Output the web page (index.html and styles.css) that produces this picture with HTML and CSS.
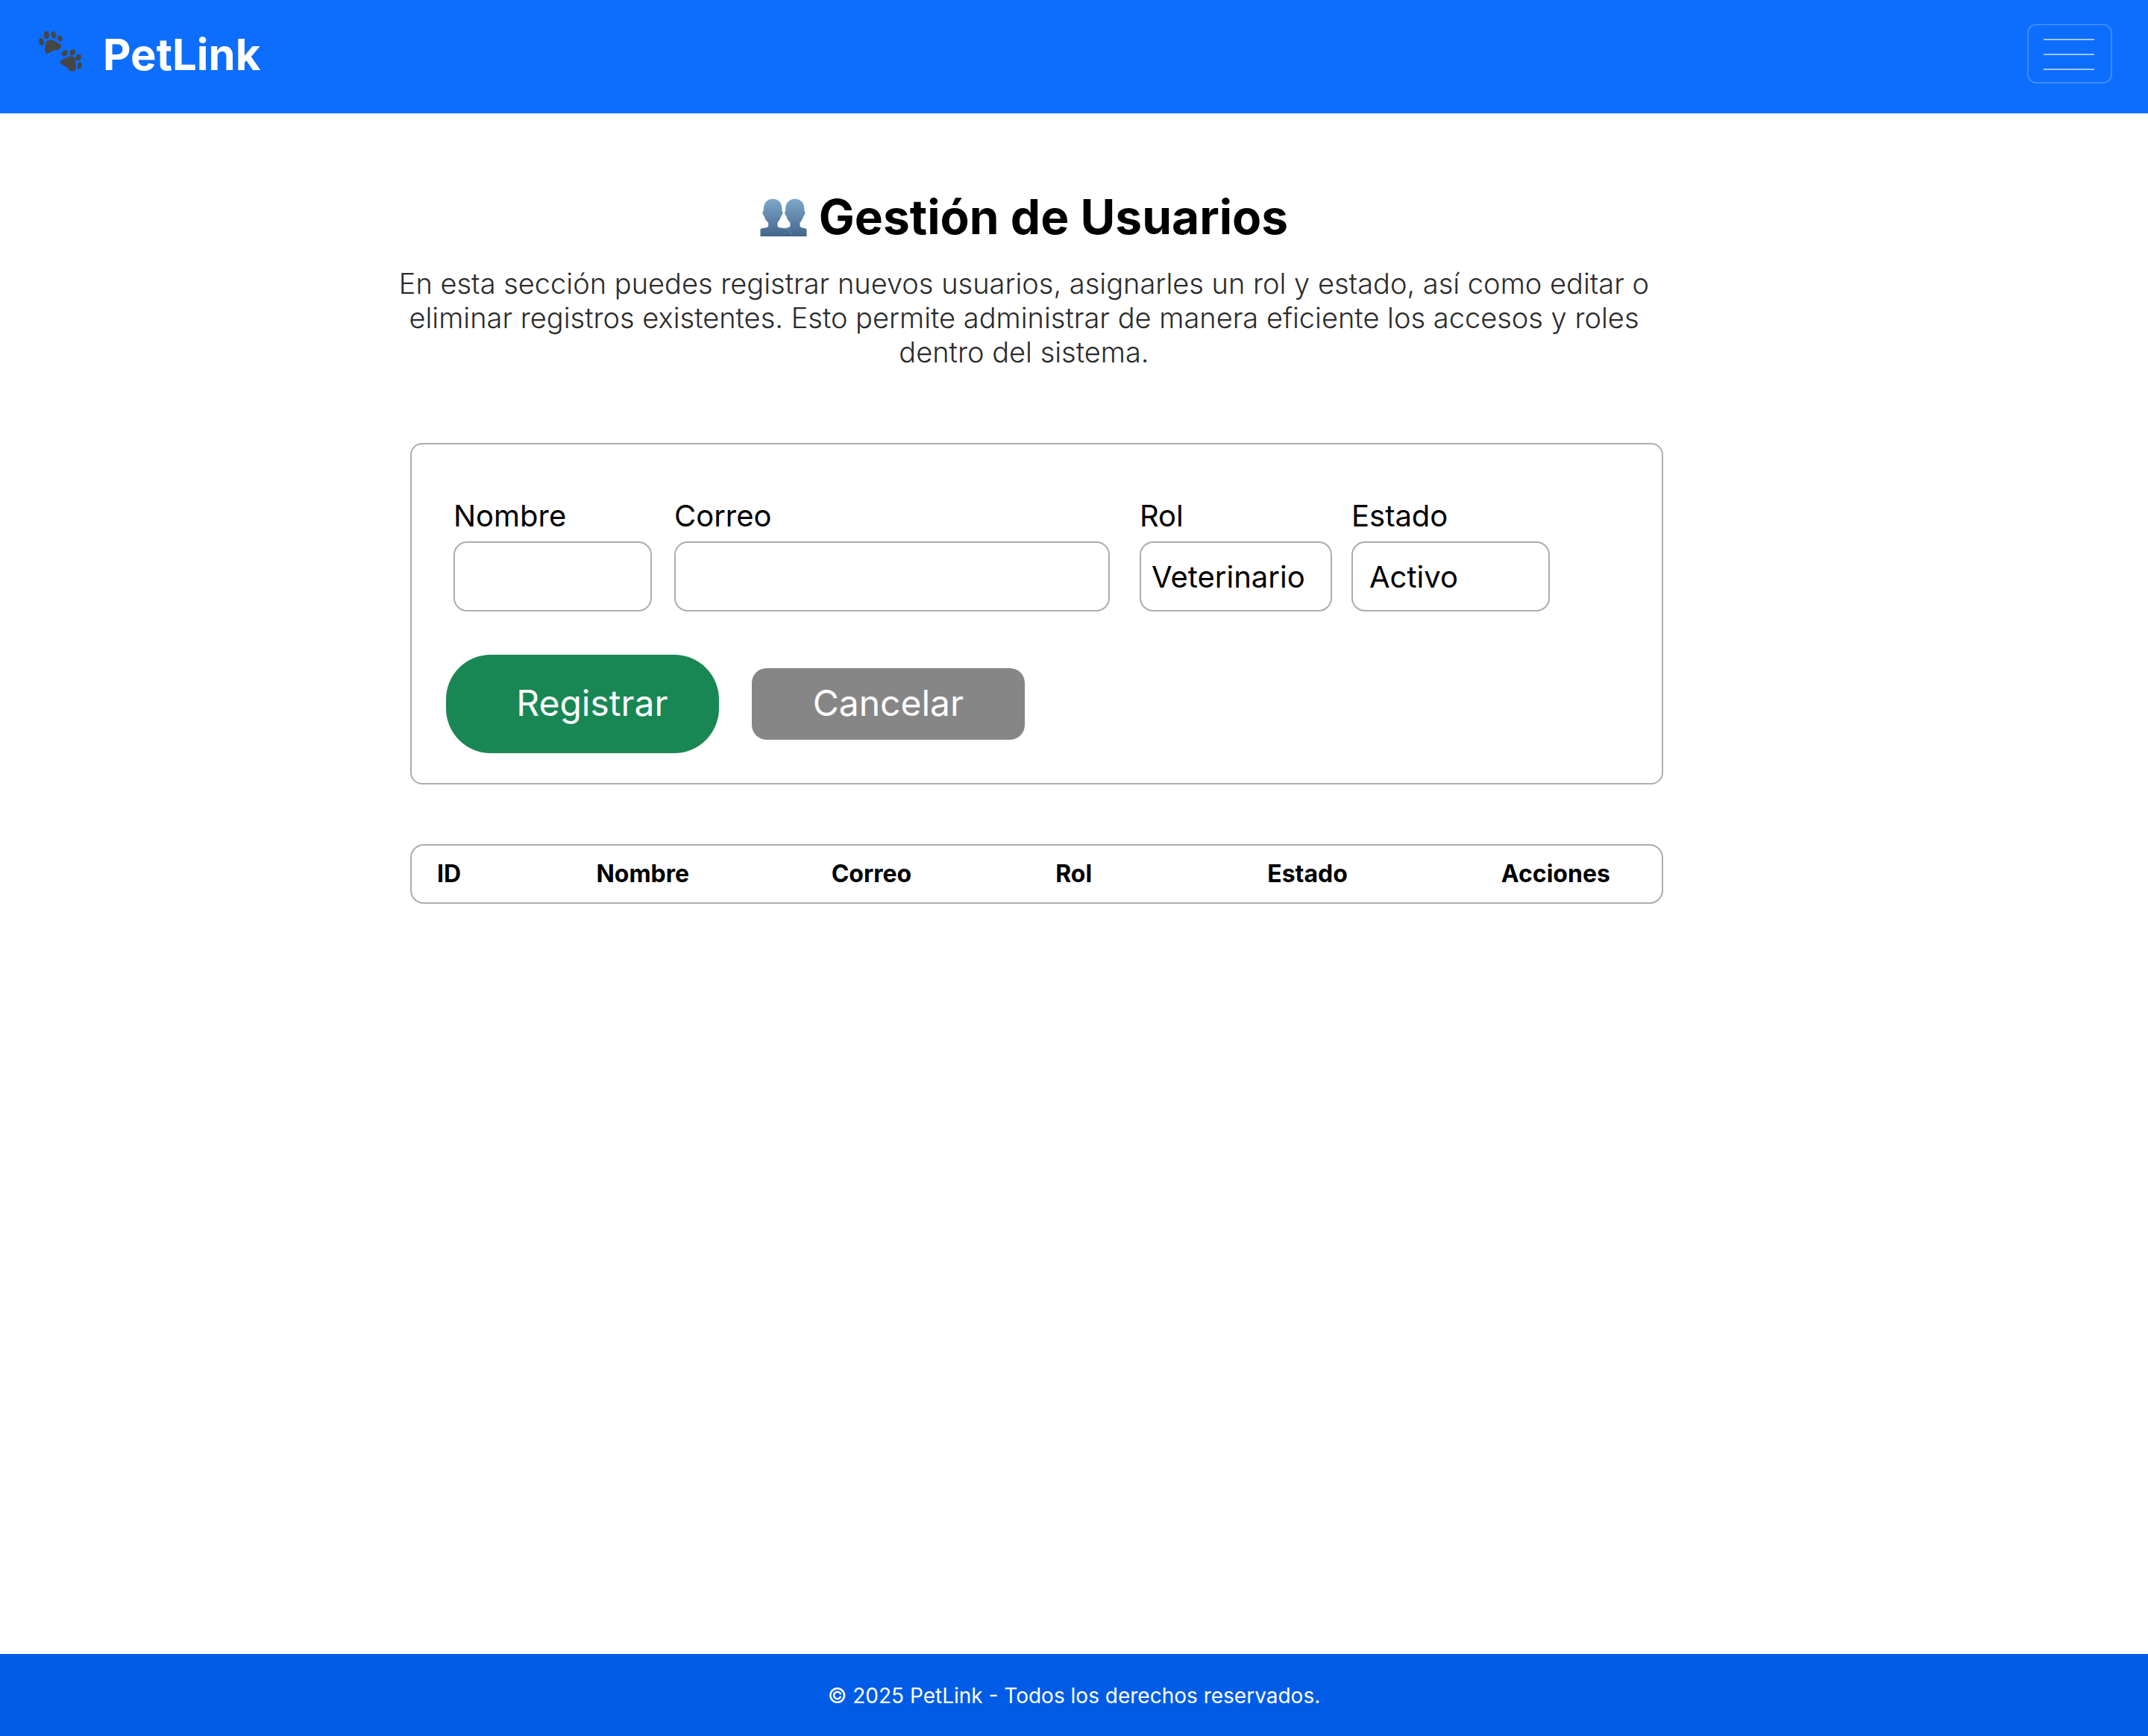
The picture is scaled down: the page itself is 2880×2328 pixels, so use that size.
FILE: index.html
```html
<!DOCTYPE html>
<html lang="es">
<head>
  <meta charset="utf-8">
  <meta name="viewport" content="width=device-width, initial-scale=1">
  <title>PetLink - Gestión de Usuarios</title>
  <link rel="stylesheet" href="styles.css">
</head>
<body>
  <header class="navbar">
    <a class="brand" href="#">
      <svg class="brand-icon" viewBox="0 0 240 240" aria-hidden="true">
        <g fill="#464646">
          <ellipse cx="47" cy="78" rx="10" ry="16" transform="rotate(-14 47 78)"/>
          <ellipse cx="67" cy="51" rx="11" ry="16" transform="rotate(-4 67 51)"/>
          <ellipse cx="96" cy="50" rx="10" ry="15" transform="rotate(-14 96 50)"/>
          <ellipse cx="121" cy="65" rx="9" ry="12" transform="rotate(-32 121 65)"/>
          <path d="M69 75C77 68 91 69 101 76C109 82 124 85 126 94C128 104 120 110 108 111C94 112 88 116 82 121C73 128 60 126 60 114C60 105 63 101 63 92C63 84 64 79 69 75Z"/>
          <ellipse cx="140" cy="124" rx="10" ry="14" transform="rotate(36 140 124)"/>
          <ellipse cx="172" cy="121" rx="11" ry="14" transform="rotate(38 172 121)"/>
          <ellipse cx="196" cy="141" rx="11" ry="13" transform="rotate(22 196 141)"/>
          <ellipse cx="200" cy="174" rx="9" ry="14" transform="rotate(14 200 174)"/>
          <path d="M149 141C158 135 174 134 180 142C186 149 184 158 184 167C184 176 189 184 184 191C178 199 165 199 158 192C150 184 146 177 137 174C128 171 122 166 123 158C124 148 140 147 149 141Z"/>
        </g>
      </svg>
      <span>PetLink</span>
    </a>
    <button class="toggler" type="button" aria-label="Abrir menú">
      <span class="toggler-bar"></span>
      <span class="toggler-bar"></span>
      <span class="toggler-bar"></span>
    </button>
  </header>

  <main class="content">
    <section class="intro">
      <h1 class="title">
        <svg class="title-icon" viewBox="26 34 188 156" aria-hidden="true">
          <defs>
            <linearGradient id="people" gradientUnits="userSpaceOnUse" x1="0" y1="36" x2="0" y2="187">
              <stop offset="0" stop-color="#7da8c9"/>
              <stop offset="1" stop-color="#45658c"/>
            </linearGradient>
          </defs>
          <path fill="url(#people)" d="M166 36C189 36 204 52 204 78L203 84C209 83 208 100 201 104C197 118 192 125 186 132V145C187 154 203 151 213 157V187H117V157C127 151 146 154 147 145V132C139 125 134 118 131 104C124 100 123 83 129 84L128 78C128 52 143 36 166 36Z"/>
          <path fill="url(#people)" d="M77 36C100 36 114 52 114 78L113 84C119 83 118 100 111 104C107 118 102 125 96 132V145C97 154 120 152 132 157C144 160 151 170 152 187H27V157C37 151 58 154 59 145V132C51 125 45 118 42 104C35 100 34 83 40 84V78C40 52 54 36 77 36Z"/>
          <path fill="none" stroke="#6b96b8" stroke-width="2" d="M116 154C138 154 150 163 151 178"/>
        </svg>
        <span>Gestión de Usuarios</span>
      </h1>
      <p class="lead">En esta sección puedes registrar nuevos usuarios, asignarles un rol y estado, así como editar o eliminar registros existentes. Esto permite administrar de manera eficiente los accesos y roles dentro del sistema.</p>
    </section>

    <form class="card">
      <div class="fields">
        <div class="field field-name">
          <label for="nombre">Nombre</label>
          <input class="control" id="nombre" type="text">
        </div>
        <div class="field field-mail">
          <label for="correo">Correo</label>
          <input class="control" id="correo" type="email">
        </div>
        <div class="field field-role">
          <label for="rol">Rol</label>
          <select class="control" id="rol"><option>Veterinario</option></select>
        </div>
        <div class="field field-state">
          <label for="estado">Estado</label>
          <select class="control" id="estado"><option>Activo</option></select>
        </div>
      </div>
      <div class="actions">
        <button class="btn btn-save" type="submit">Registrar</button>
        <button class="btn btn-cancel" type="reset">Cancelar</button>
      </div>
    </form>

    <table class="users">
      <colgroup>
        <col class="col-id"><col class="col-name"><col class="col-mail"><col class="col-role"><col class="col-state"><col class="col-actions">
      </colgroup>
      <thead>
        <tr>
          <th scope="col">ID</th>
          <th scope="col">Nombre</th>
          <th scope="col">Correo</th>
          <th scope="col">Rol</th>
          <th scope="col">Estado</th>
          <th scope="col">Acciones</th>
        </tr>
      </thead>
    </table>
  </main>

  <footer class="footer">© 2025 PetLink - Todos los derechos reservados.</footer>
</body>
</html>
```

FILE: styles.css
```css
* {
  box-sizing: border-box;
}

body {
  display: flex;
  flex-direction: column;
  min-height: 100vh;
  margin: 0;
  background: #fff;
  color: #000;
  font-family: Inter, "Liberation Sans", sans-serif;
}

.navbar {
  display: flex;
  align-items: flex-start;
  justify-content: space-between;
  height: 152px;
  padding: 30px 48px 0 40px;
  background: #0d6efd;
}

.brand {
  display: flex;
  align-items: flex-start;
  gap: 18px;
  color: #fff;
  font-size: 58px;
  font-weight: 700;
  line-height: 86px;
  text-decoration: none;
}

.brand-icon {
  width: 80px;
  height: 80px;
}

.toggler {
  display: flex;
  flex-direction: column;
  gap: 18px;
  width: 114px;
  height: 80px;
  margin-top: 2px;
  padding: 18px 20px 16px;
  border: 2px solid #3d8bfd;
  border-radius: 12px;
  background: none;
}

.toggler-bar {
  width: 68px;
  height: 2px;
  background: #9ec5fe;
}

.content {
  flex: 1;
  padding: 96px 22.57% 96px 18.4%;
}

.intro {
  padding-right: 14px;
  text-align: center;
}

.title {
  display: flex;
  align-items: center;
  justify-content: center;
  gap: 16px;
  margin: 0;
  font-size: 64px;
  font-weight: 700;
  line-height: 86px;
}

.title-icon {
  width: 63px;
  height: 52px;
  margin-top: 2px;
}

.lead {
  margin: 23px 0 0;
  color: #2b2b2b;
  font-size: 38px;
  font-weight: 300;
  line-height: 46px;
}

.card {
  margin: 99px 0 0 20px;
  padding: 72px 150px 40px 46px;
  border: 2px solid #adadad;
  border-radius: 16px;
}

.fields {
  display: flex;
  gap: 26px;
  margin-left: 10px;
}

.field {
  display: flex;
  flex-direction: column;
  gap: 10px;
  min-width: 0;
  font-size: 40px;
  line-height: 48px;
}

.field-name {
  flex: 266;
  margin-right: 4px;
}

.field-mail {
  flex: 584;
  margin-right: 14px;
}

.field-role {
  flex: 258;
}

.field-state {
  flex: 266;
}

.control {
  width: 100%;
  height: 94px;
  padding: 2px 14px 0;
  border: 2px solid #adadad;
  border-radius: 18px;
  background: #fff;
  color: #000;
  font: inherit;
  appearance: none;
}

.field-state .control {
  padding-left: 22px;
}

.actions {
  display: flex;
  align-items: center;
  gap: 44px;
  margin-top: 58px;
}

.btn {
  width: 366px;
  padding: 0 0 2px;
  border: 0;
  color: #fff;
  font-family: inherit;
  font-size: 48px;
  font-weight: 400;
  line-height: 58px;
}

.btn-save {
  height: 132px;
  padding-left: 26px;
  border-radius: 60px;
  background: #198754;
}

.btn-cancel {
  height: 96px;
  border-radius: 20px;
  background: #868686;
}

.users {
  width: calc(100% - 20px);
  margin: 80px 0 0 20px;
  padding-left: 34px;
  border: 2px solid #adadad;
  border-radius: 18px;
  border-spacing: 0;
  table-layout: fixed;
}

.users th {
  height: 76px;
  padding: 0;
  font-size: 32px;
  font-weight: 700;
  line-height: 38px;
  text-align: left;
}

.col-id {
  width: 13%;
}

.col-name {
  width: 19.2%;
}

.col-mail {
  width: 18.3%;
}

.col-role {
  width: 17.3%;
}

.col-state {
  width: 19.1%;
}

.footer {
  padding: 39px 0 37px;
  background: #005ce6;
  color: #fff;
  font-size: 28px;
  line-height: 34px;
  text-align: center;
}
```
